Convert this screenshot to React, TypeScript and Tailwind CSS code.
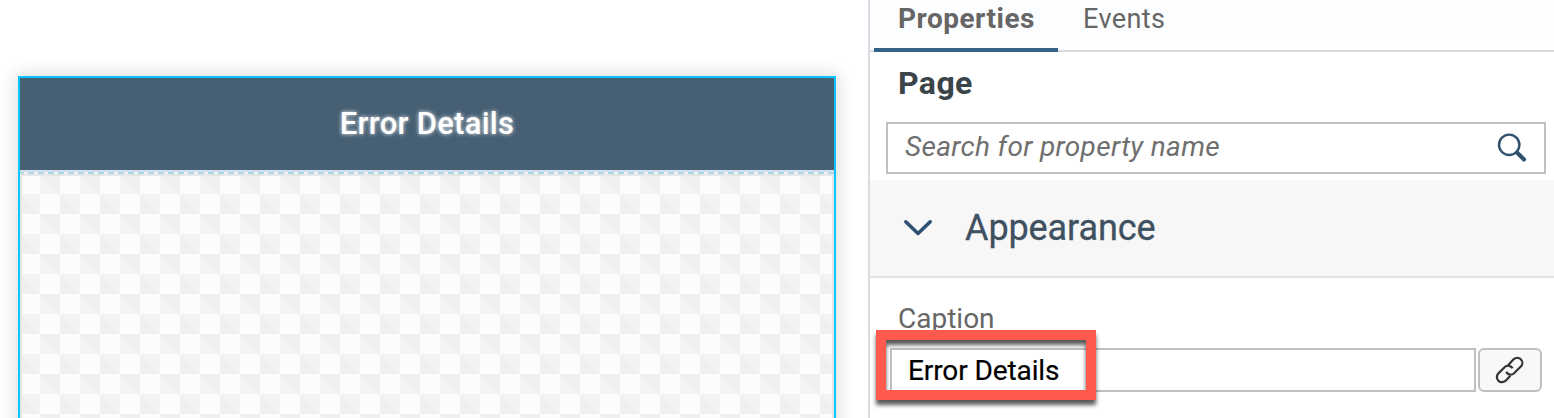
import type { ReactNode } from "react";

const FONT = "font-['Roboto','Noto_Sans',sans-serif]";

function Label({ className, children }: { className: string; children: ReactNode }) {
  return <span className={`block whitespace-nowrap ${className}`}>{children}</span>;
}

function DesignCanvas() {
  return (
    <section className="ml-[18px] mt-[76px] flex h-[360px] w-[818px] shrink-0 flex-col border-2 border-[#0ac5ff] bg-white shadow-[0_0_16px_2px_rgba(0,0,0,0.14)]">
      <header className="flex h-[92px] shrink-0 items-center justify-center bg-[#465f73]">
        <Label className="text-[31px] leading-[36px] font-medium tracking-[0.27px] text-white [text-shadow:0_0_4px_rgba(255,255,255,0.9)]">
          Error Details
        </Label>
      </header>
      <div className="h-[2px] shrink-0 bg-[#d3dfef]" />
      <div className="h-[2px] shrink-0 bg-[repeating-linear-gradient(90deg,#acd8e6_0_4px,#f2f2f2_4px_8px,#acd8e6_8px_10px)]" />
      <div className="flex-1 border-x-2 border-t-2 border-[#e6e6e6] bg-[#fcfcfc] bg-[image:linear-gradient(45deg,#f0f0f0_25%,transparent_25%,transparent_75%,#f0f0f0_75%),linear-gradient(45deg,#f3f3f3_25%,transparent_25%,transparent_75%,#f3f3f3_75%)] bg-[length:40px_40px] bg-[position:-2px_-2px,18px_-22px]" />
    </section>
  );
}

function SearchBox() {
  return (
    <div className="ml-4 mt-[18px] flex h-[52px] w-[660px] shrink-0 items-center justify-between border-2 border-[#bfbfbf] bg-white pl-[17px] pr-[17px]">
      <Label className="-mt-0.5 text-[28px] leading-[34px] tracking-[0.33px] text-[#6f6f6f] italic">
        Search for property name
      </Label>
      <svg className="h-[30px] w-[30px] text-[#31526f]" viewBox="0 0 30 30" fill="none" stroke="currentColor">
        <circle cx="12.2" cy="11.8" r="10.2" strokeWidth="2.4" />
        <path d="M20 19.6 27 26.4" strokeWidth="4.2" strokeLinecap="round" />
      </svg>
    </div>
  );
}

function PropertiesPanel() {
  return (
    <aside className="ml-8 flex h-[418px] w-[686px] shrink-0 flex-col border-l-2 border-[#d9dae2] bg-white">
      <nav className="flex h-[52px] shrink-0 border-b-2 border-[#d9dadd] bg-[#fcfdfe]">
        <div className="ml-1 h-[52px] w-[184px] border-b-4 border-[#346187] pl-6 pt-0.5">
          <Label className="text-[28px] leading-[34px] font-bold tracking-[0.5px] text-[#666]">Properties</Label>
        </div>
        <div className="pl-[25px] pt-0.5">
          <Label className="text-[27px] leading-[34px] tracking-[0.4px] text-[#666]">Events</Label>
        </div>
      </nav>
      <h2 className="mt-3 mb-0.5 ml-7 h-[38px] shrink-0">
        <Label className="text-[32px] leading-[38px] font-bold tracking-[0.4px] text-[#3a4449]">Page</Label>
      </h2>
      <SearchBox />
      <div className="mt-1.5 flex h-[98px] shrink-0 items-center border-b-2 border-[#e2e2e2] bg-[#f7f7f7] pl-[33px]">
        <svg className="h-[18px] w-[30px] text-[#2d5073]" viewBox="0 0 30 18" fill="none" stroke="currentColor" strokeWidth="3.6" strokeLinecap="round" strokeLinejoin="round">
          <path d="M2.8 2.8 15 14.5 27.2 2.8" />
        </svg>
        <Label className="ml-[32px] text-[36px] leading-[44px] tracking-[-0.1px] text-[#3f5161] [-webkit-text-stroke:0.3px_#3f5161]">Appearance</Label>
      </div>
      <div className="mt-6 ml-7 h-[34px] shrink-0">
        <Label className="text-[28px] leading-[34px] text-[#666]">Caption</Label>
      </div>
      <div className="relative mt-3 flex shrink-0">
        <div className="ml-5 flex h-11 w-[586px] items-center border-2 border-[#bfbfbf] bg-white pt-0.5 pl-4">
          <Label className="text-[28px] leading-[34px] tracking-[-0.1px] text-black [-webkit-text-stroke:0.2px_#000]">Error Details</Label>
        </div>
        <button type="button" className="ml-0.5 flex h-11 w-16 items-center justify-center rounded-md border-2 border-[#bfbfbf] bg-[#f7f9f8]" aria-label="Bind">
          <svg className="h-[30px] w-[30px] text-[#333]" viewBox="0 0 30 30" fill="none" stroke="currentColor" strokeWidth="2.2" strokeLinecap="butt">
            <path d="M13.3 10 18.8 4.1a5.1 5.1 0 0 1 7.3 7.1l-7.3 7.3a5.1 5.1 0 0 1-7.6-1.6" />
            <path d="M17.6 13.3a5.1 5.1 0 0 0-7.8-1.3L3.4 18.4a5.1 5.1 0 0 0 7.2 7.3l4.8-4.9" />
          </svg>
        </button>
        <div className="absolute -top-[18px] left-[6px] h-[70px] w-[220px] border-[10px] border-[#ff5a4d] drop-shadow-[0_5px_2px_rgba(0,0,0,0.65)]" />
      </div>
    </aside>
  );
}

export default function App() {
  return (
    <main className={`flex h-[418px] w-[1554px] overflow-hidden bg-white ${FONT}`}>
      <DesignCanvas />
      <PropertiesPanel />
    </main>
  );
}
